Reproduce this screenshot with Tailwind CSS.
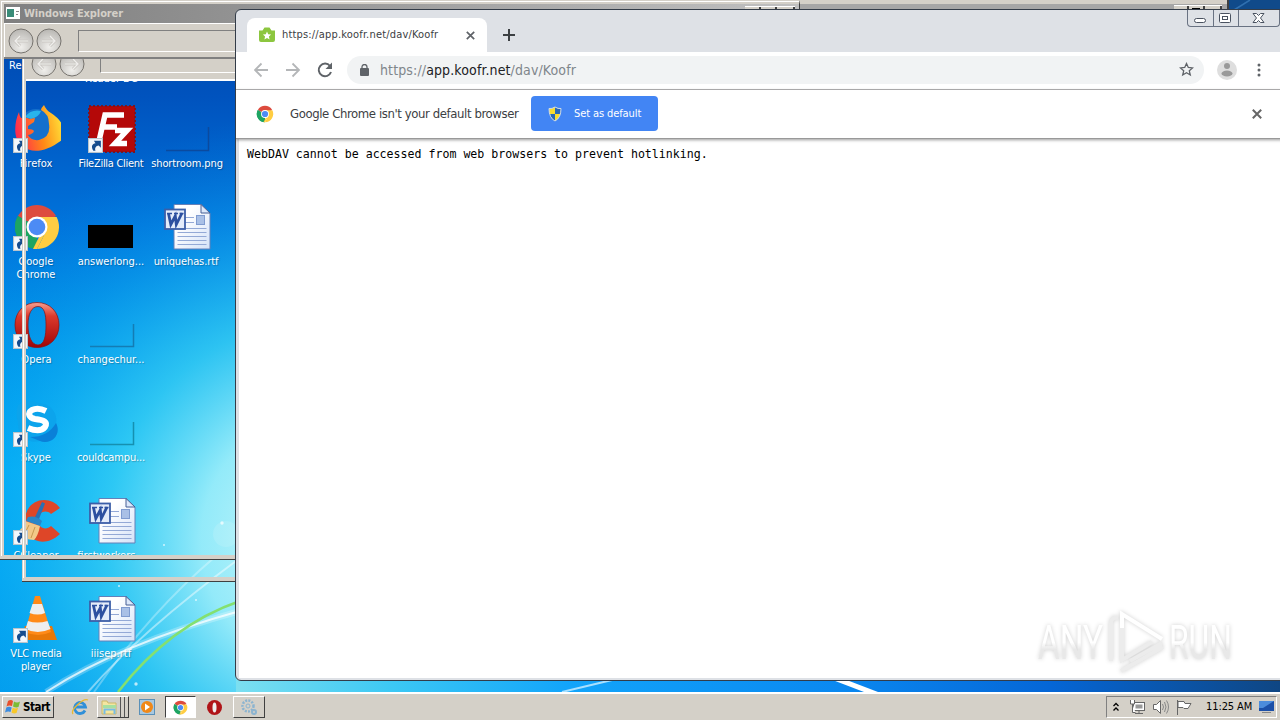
<!DOCTYPE html>
<html lang="en">
<head>
<meta charset="utf-8">
<title>Desktop</title>
<script src="https://cdn.jsdelivr.net/npm/@tailwindcss/browser@4"></script>
</head>
<body class="w-[1280px] h-[720px] overflow-hidden font-['DejaVu_Sans_Condensed','DejaVu_Sans',sans-serif] text-[11px]">
<svg width="0" height="0" class="absolute">
  <defs>
    <linearGradient id="page" x1="0" y1="0" x2="1" y2="1"><stop offset=".3" stop-color="#fff"/><stop offset="1" stop-color="#d4e2f8"/></linearGradient>
    <radialGradient id="ball" cx=".5" cy=".75" r=".8"><stop offset="0" stop-color="#f0efec"/><stop offset="1" stop-color="#b4b2ae"/></radialGradient>
    <linearGradient id="red" x1="0" y1="0" x2="0" y2="1"><stop offset="0" stop-color="#f8a090"/><stop offset=".3" stop-color="#dc3a2c"/><stop offset="1" stop-color="#a00508"/></linearGradient>
    <linearGradient id="fox" x1="0" y1=".5" x2="1" y2=".3"><stop offset="0" stop-color="#ff2a50"/><stop offset=".5" stop-color="#ff8a16"/><stop offset="1" stop-color="#ffe93c"/></linearGradient>
    <symbol id="word" viewBox="0 0 48 48">
      <path d="M10 1.500h27l9 8.500v36h-36z" fill="url(#page)" stroke="#6580b8"/>
      <path d="M37 1.500v8.500h9z" fill="#dce8fa" stroke="#465f94"/>
      <path d="M21 14.500h9M21 19.500h9M13.500 25.500h29M13.500 29.500h29M13.500 33.500h29M13.500 37.500h29M13.500 41.500h29" stroke="#93a9d6"/>
      <rect x="32.500" y="12.500" width="8" height="9" fill="#a9c0e6" stroke="#7f9bd0"/>
      <rect x="1" y="6.500" width="20" height="19.500" fill="#e4ecfa" stroke="#3c5fa8" stroke-width="1.800"/>
      <path d="M4.500 10.500l2.300 11 4.500-8.500 1 8.500L18 10" fill="none" stroke="#2d50a0" stroke-width="2.800"/><path d="M3 10.500h5M10 10.500h4M15.500 10.500h4" stroke="#2d50a0" stroke-width="1.500"/>
    </symbol>
    <symbol id="chrome" viewBox="0 0 48 48">
      <path d="M24 24L4.950 13A22 22 0 0 1 43.050 13z" fill="#dd4b3e"/>
      <path d="M24 24L24 46A22 22 0 0 1 4.950 13z" fill="#1da462"/>
      <path d="M24 14H43.600A22 22 0 0 1 24 46L32.700 29z" fill="#ffcd42"/>
      <path d="M4.950 13L15.300 29 24 34 18 45.200A22 22 0 0 1 4.950 13z" fill="#1da462"/>
      <path d="M32.700 29L24 46H20L26 34z" fill="#ffcd42"/>
      <circle cx="24" cy="24" r="10.500" fill="#fff"/><circle cx="24" cy="24" r="8.300" fill="#4c8bf5"/>
    </symbol>
    <symbol id="opera" viewBox="0 0 48 48">
      <path fill-rule="evenodd" d="M24 1.500C11 1.500 2 11 2 24s9 22.500 22 22.500 22-9.500 22-22.500S37 1.500 24 1.500zm1 4c6.500 0 8 8 8 18.500s-1.500 20-8 20-10-9-10-20 3.500-18.500 10-18.500z" fill="url(#red)" stroke="#8c1010" stroke-width=".7"/>
    </symbol>
    <symbol id="link" viewBox="0 0 14 14">
      <rect x=".5" y=".5" width="13" height="13" fill="#f4f8fc" stroke="#b9c4cc"/>
      <path d="M5 12C2.500 8 4 5.500 7 5L5.500 2.500H12V9L10 7C7.500 7.500 6 9 7 12z" fill="#164c8e"/>
    </symbol>
    <symbol id="back" viewBox="0 0 26 26">
      <circle cx="13" cy="13" r="12" fill="url(#ball)" stroke="#77746f"/>
      <path d="M20 13H8M12 8l-5 5 5 5" fill="none" stroke="#cbc8c3" stroke-width="3"/><path d="M20 13H8M12 8l-5 5 5 5" fill="none" stroke="#f0efed" stroke-width="1.200"/>
    </symbol>
    <symbol id="fwd" viewBox="0 0 26 26">
      <circle cx="13" cy="13" r="12" fill="url(#ball)" stroke="#77746f"/>
      <path d="M6 13h12M14 8l5 5-5 5" fill="none" stroke="#cbc8c3" stroke-width="3"/><path d="M6 13h12M14 8l5 5-5 5" fill="none" stroke="#f0efed" stroke-width="1.200"/>
    </symbol>
  </defs>
</svg>

<main class="relative w-[1280px] h-[692px] overflow-hidden">
  <!-- wallpaper -->
  <svg class="absolute inset-0" width="1280" height="692" viewBox="0 0 1280 692">
    <defs>
      <linearGradient id="sky" x1="0" y1="0" x2="0" y2="1"><stop offset="0" stop-color="#0045a8"/><stop offset=".14" stop-color="#0053be"/><stop offset=".33" stop-color="#0074dc"/><stop offset=".5" stop-color="#0096ea"/><stop offset=".68" stop-color="#00acf6"/><stop offset="1" stop-color="#009cee"/></linearGradient>
      <radialGradient id="glow" gradientUnits="userSpaceOnUse" cx="330" cy="540" r="430"><stop offset="0" stop-color="#d8fbfa"/><stop offset=".3" stop-color="#a0f0fa" stop-opacity=".92"/><stop offset=".52" stop-color="#3cd2f4" stop-opacity=".75"/><stop offset=".78" stop-color="#14b0f2" stop-opacity=".3"/><stop offset="1" stop-color="#0090e8" stop-opacity="0"/></radialGradient>
      <linearGradient id="floor"><stop offset="0" stop-color="#7cdff0"/><stop offset=".15" stop-color="#3cc8f4"/><stop offset=".32" stop-color="#12a4fa"/><stop offset=".58" stop-color="#0a88f0"/><stop offset=".78" stop-color="#0566d6"/><stop offset="1" stop-color="#0f4683"/></linearGradient>
    </defs>
    <rect width="1280" height="692" fill="url(#sky)"/>
    <rect width="760" height="692" fill="url(#glow)"/>
    <rect x="1220" width="60" height="20" fill="#104a8a"/><path d="M1234 10l16-10" stroke="#3070b0" stroke-width="1.500"/>
    <rect x="236" y="676" width="1044" height="16" fill="url(#floor)"/>
    <path d="M562 692L612 680" stroke="#a8e0ff" stroke-width="2"/><path d="M830 679h14l34 13h-14z" fill="#fff"/>
    <g fill="none" stroke="#fff">
      <path d="M88 692Q140 632 240 558" stroke-opacity=".45" stroke-width="2"/>
      <path d="M94 692Q150 612 216 556" stroke-opacity=".3" stroke-width="2"/>
      <path d="M46 692Q120 644 240 611" stroke-opacity=".25" stroke-width="6"/>
      <path d="M46 692Q120 644 240 611" stroke-opacity=".75" stroke-width="2"/>
    </g>
    <path d="M118 692Q170 625 240 601" fill="none" stroke="#84e070" stroke-width="2.500"/>
    <g fill="#fff" fill-opacity=".7"><circle cx="222" cy="523" r="1.700"/><circle cx="136" cy="684" r="1.700"/><circle cx="119" cy="586" r="1"/><circle cx="164" cy="545" r="1"/><circle cx="196" cy="600" r="1"/></g>
    <circle cx="226" cy="534" r="13" fill="#fff" fill-opacity=".12"/>
  </svg>

  <!-- desktop icons -->
  <div class="absolute left-[9px] top-[59px] text-white leading-[13px]">Re</div>
  <div class="absolute left-[85px] top-[72px] text-white leading-[13px]">Reader DC</div>
  <div class="absolute left-0 top-[105px] grid grid-cols-[72px_78px_74px] auto-rows-[98px] text-white text-center leading-[13px] [text-shadow:1px_1px_1px_#00000040]">
    <div class="flex flex-col items-center">
      <div class="relative w-12 h-12 ml-0.5 mb-1">
        <svg width="48" height="48" viewBox="0 0 48 48"><circle cx="23" cy="20" r="16" fill="#1470cc"/><path d="M12 12q6-8 16-6-2 6-10 8z" fill="#28b4ec"/><path d="M6 7q0 3 2 6 5-1 9 1l5-1-1 4-6 4v3q5 0 6 2-1 3-6 4 3 6 11 5 12-3 10-16 0-10-8-14 0-2 3-5 2 5 7 8 18 12 11 27C33 47 19 49 9 41 0 34 1 18 6 7z" fill="url(#fox)"/></svg>
        <svg class="absolute left-0 bottom-0" width="15" height="15"><use href="#link"/></svg>
      </div><span>Firefox</span>
    </div>
    <div class="flex flex-col items-center">
      <div class="relative w-12 h-12 mb-1 ml-0.5">
        <svg width="48" height="48" viewBox="0 0 48 48"><rect x="1" y="1" width="46" height="46" fill="#b40808" stroke="#7c1420" stroke-width="2" stroke-dasharray="2 2"/><path d="M11 36L17 10H36M15 22H29M27 25.500H39L27 38.500H39" fill="none" stroke="#fff" stroke-width="5.500"/></svg>
        <svg class="absolute left-0 bottom-0" width="15" height="15"><use href="#link"/></svg>
      </div><span class="tracking-[-0.28px]">FileZilla Client</span>
    </div>
    <div class="flex flex-col items-center">
      <div class="w-12 h-12 mb-1"><svg width="48" height="48"><path d="M3 45.500H45.500V22" fill="none" stroke="#0b4a9e" stroke-width="1.500"/></svg></div><span class="tracking-[-0.1px]">shortroom.png</span>
    </div>

    <div class="flex flex-col items-center">
      <div class="relative w-12 h-12 ml-0.5 mb-1"><svg width="48" height="48"><use href="#chrome"/></svg><svg class="absolute left-0 bottom-0" width="15" height="15"><use href="#link"/></svg></div><span>Google<br>Chrome</span>
    </div>
    <div class="flex flex-col items-center">
      <div class="w-12 h-12 mb-1 pl-px pt-[22px]"><div class="w-[45px] h-[23px] bg-black"></div></div><span>answerlong...</span>
    </div>
    <div class="flex flex-col items-center"><svg class="mb-1 ml-px" width="48" height="48"><use href="#word"/></svg><span class="tracking-[-0.1px] mr-0.5">uniquehas.rtf</span></div>

    <div class="flex flex-col items-center">
      <div class="relative w-12 h-12 ml-0.5 mb-1"><svg width="48" height="48"><use href="#opera"/></svg><svg class="absolute left-0 bottom-0" width="15" height="15"><use href="#link"/></svg></div><span class="ml-px">Opera</span>
    </div>
    <div class="flex flex-col items-center">
      <svg class="mb-1" width="48" height="48"><path d="M3 45.500H46.500V23" fill="none" stroke="#147cb4" stroke-width="1.500"/></svg><span>changechur...</span>
    </div>
    <div></div>

    <div class="flex flex-col items-center">
      <div class="relative w-12 h-12 ml-0.5 mb-1"><svg width="48" height="48" viewBox="0 0 48 48"><path d="M5 6q10-7 20-2c14 0 20 12 18 20 6 12-5 22-16 18C14 46 4 34 5 24q-3-10 0-18z" fill="#0ca4ec"/><path d="M43 24c6 12-5 22-16 18l-10-4q18 0 26-14z" fill="#0a80d8"/><path d="M33 12q-8-4-14-1c-5 3-3 8 3 9 9 1 13 3 10 8q-5 6-17 1" fill="none" stroke="#fff" stroke-width="6"/></svg><svg class="absolute left-0 bottom-0" width="15" height="15"><use href="#link"/></svg></div><span>Skype</span>
    </div>
    <div class="flex flex-col items-center">
      <svg class="mb-1" width="48" height="48"><path d="M3 45.500H46.500V23" fill="none" stroke="#1690b0" stroke-width="1.500"/></svg><span class="tracking-[-0.15px]">couldcampu...</span>
    </div>
    <div></div>

    <div class="flex flex-col items-center">
      <div class="relative w-12 h-12 ml-0.5 mb-1"><svg width="48" height="48" viewBox="0 0 48 48"><path d="M47 11C38-2 14 0 12 22s19 30 35 15l-9-8c-5 5-13 2-13-6s8-11 13-6z" fill="#de4628"/><path d="M29 5l3 1.500-7 18-4-2z" fill="#2a70b4"/><path d="M15 20q8-2 14 4l-2 5-14-5z" fill="#2a86c8"/><path d="M12 24l15 5q-2 10-6 14-10 0-17-8 6-3 8-11z" fill="#f2c888"/><path d="M16 28l-5 10M22 30l-4 11" stroke="#c89850"/></svg><svg class="absolute left-0 bottom-0" width="15" height="15"><use href="#link"/></svg></div><span>CCleaner</span>
    </div>
    <div class="flex flex-col items-center"><svg class="mb-1 ml-[3px]" width="48" height="48"><use href="#word"/></svg><span>firstworkers...</span></div>
    <div></div>

    <div class="flex flex-col items-center">
      <div class="relative w-12 h-12 ml-0.5 mb-1"><svg width="48" height="48" viewBox="0 0 48 48"><path d="M12 31h27l5 14H8z" fill="#e87808"/><path d="M22 1h5l11 36q-13 6-26 0z" fill="#ff8a18"/><path d="M19.500 9h9.500l3 9q-7 3-15.500 0zM15 26q9 3 19.500 0l3 8q-13 6-25 0z" fill="#eee"/></svg><svg class="absolute left-0 bottom-0" width="15" height="15"><use href="#link"/></svg></div><span class="tracking-[-0.2px]">VLC media<br>player</span>
    </div>
    <div class="flex flex-col items-center"><svg class="mb-1 ml-[3px]" width="48" height="48"><use href="#word"/></svg><span>iiisep.rtf</span></div>
    <div></div>
  </div>

  <!-- rear explorer window -->
  <section class="absolute left-[22px] top-0 w-[1207px] h-[581px] border-l-4 border-b-4 border-r-2 border-[#d4d0c8] border-r-[#404040] shadow-[0_1px_0_#404040]">
    <div class="absolute -left-[3px] top-0 w-px h-[578px] bg-white"></div>
    <div class="h-[10px] border-t-4 border-[#d4d0c8] bg-[#a6a6a6] flex justify-end pr-[5px]">
      <div class="mt-px h-5 w-[48px] bg-[#d4d0c8] border-t border-white flex"><i class="w-[15px] border-r-2 border-[#404040]"></i><i class="w-[16px] border-r-2 border-[#404040] px-[3px] pt-[2px]"><i class="block h-[2px] bg-black"></i></i><i class="w-[17px] border-r-2 border-[#404040]"></i></div>
    </div>
    <div class="relative h-[71px] bg-[#d4d0c8] border-b-2 border-b-white flex items-end overflow-hidden">
      <svg class="ml-[5px] mb-[2px]" width="26" height="26"><use href="#back"/></svg>
      <svg class="ml-[2px] mb-[2px]" width="26" height="26"><use href="#fwd"/></svg>
      <div class="ml-[15px] mb-[6px] h-6 flex-1 border-l border-b border-l-[#808080] border-b-white"></div>
    </div>
  </section>

  <!-- front explorer window -->
  <section class="absolute left-0 top-0 w-[800px] h-[559px] flex flex-col border-4 border-[#d4d0c8] border-r-[#404040] border-r-[1px] shadow-[0_1px_0_#404040]">
    <div class="absolute -left-[3px] -top-[3px] w-[798px] h-[555px] border-l border-t border-white"></div>
    <header class="h-[19px] shrink-0 flex pl-[2px] bg-linear-to-r from-[#808080] to-[#c0c0c0] text-[#d4d0c8] font-bold overflow-hidden">
      <svg class="mt-[3px]" width="14" height="12"><rect width="14" height="12" fill="#fff"/><rect x="1" y="2" width="7" height="8" fill="#3a8c78"/><path d="M10 4.500h3M10 7.500h2" stroke="#888"/></svg>
      <span class="ml-1 mt-[2px] leading-4 tracking-[-0.1px]">Windows Explorer</span>
      <div class="ml-auto mr-1 mt-[2px] w-[50px] bg-[#d4d0c8] border-t border-white flex"><i class="w-[16px] border-r-2 border-[#404040]"></i><i class="w-[16px] border-r-2 border-[#404040] px-[3px] pt-[2px]"><i class="block h-[2px] bg-black"></i></i><i class="w-[18px] border-r-2 border-[#404040]"></i></div>
    </header>
    <div class="h-[36px] shrink-0 flex items-center pl-1 bg-[#d4d0c8] border-t border-t-white border-b-2 border-b-[#808080] shadow-[inset_1px_0_0_#fff]">
      <svg width="26" height="26"><use href="#back"/></svg>
      <svg class="ml-[2px]" width="26" height="26"><use href="#fwd"/></svg>
      <div class="ml-4 h-[22px] flex-1 border-l border-y border-l-[#808080] border-t-[#808080] border-b-white"></div>
    </div>
  </section>

  <!-- browser window -->
  <section class="absolute left-[235px] top-[9px] w-[1052px] h-[672px] rounded-md border border-[#333c48] bg-[#dee1e6] overflow-hidden">
    <div class="h-[42px] flex items-end pl-[11px]">
      <div class="w-[240px] h-[34px] bg-white rounded-t-lg flex items-center pl-3">
        <svg width="16" height="16" viewBox="0 0 16 16"><path d="M0 3.500h3.500L5.500.500h5L12.500 3.500H16V13q0 2-2 2H2q-2 0-2-2z" fill="#8cc63f"/><path d="M8 4.500l1.200 2.700 2.900.3-2.200 2 .7 2.900L8 10.900l-2.600 1.500.7-2.900-2.200-2 2.900-.3z" fill="#fff"/></svg>
        <span class="ml-[7px] text-[#3c4043] tracking-[0.17px]">https://app.koofr.net/dav/Koofr</span>
        <svg class="ml-auto mr-3" width="9" height="9" viewBox="0 0 9 9"><path d="M.8.8l7.400 7.400M8.200.8L.8 8.200" stroke="#5f6368" stroke-width="1.700"/></svg>
      </div>
      <svg class="ml-4 mb-[11px]" width="12" height="12"><path d="M6 0v12M0 6h12" stroke="#3c4043" stroke-width="2"/></svg>
    </div>
    <div class="h-[38px] bg-white border-b border-[#b6b4b6] flex items-center pb-[2px]">
      <svg class="ml-[18px]" width="74" height="16" fill="none" stroke-width="1.800"><path d="M14 8H1M7.500 1.500L1 8l6.500 6.500M32 8h13M38.500 1.500L45 8l-6.500 6.500" stroke="#b4b6b8"/></svg>
      <svg class="-ml-[11px]" width="16" height="16" viewBox="0 0 16 16"><path d="M13 4A6.300 6.300 0 1 0 14 10" fill="none" stroke="#5f6368" stroke-width="2"/><path d="M15 .5v6.500H8.500z" fill="#5f6368"/></svg>
      <div class="ml-[14px] w-[857px] h-7 rounded-full bg-[#f1f3f4] flex items-center pl-[13px] pr-[10px]">
        <svg width="9" height="12"><rect y="4" width="9" height="8" rx="1" fill="#5f6368"/><path d="M2 5V3a2.500 2.500 0 0 1 5 0v2" fill="none" stroke="#5f6368" stroke-width="1.300"/></svg>
        <span class="ml-[11px] mt-px text-[14px] text-[#80868b] tracking-[0.12px]">https://<b class="font-normal text-[#202124]">app.koofr.net</b>/dav/Koofr</span>
        <svg class="ml-auto" width="15" height="15" viewBox="0 0 15 15"><path d="M7.500 1.500l1.800 4 4.300.4-3.300 2.900 1 4.200-3.800-2.200L3.700 13l1-4.200L1.400 5.900l4.300-.4z" fill="none" stroke="#5f6368" stroke-width="1.300"/></svg>
      </div>
      <svg class="ml-[13px]" width="20" height="20"><circle cx="10" cy="10" r="10" fill="#dedede"/><circle cx="10" cy="6" r="3" fill="#999"/><ellipse cx="10" cy="13.500" rx="5.500" ry="3" fill="#999"/></svg>
      <svg class="ml-[20px]" width="4" height="14" fill="#5f6368"><circle cx="2" cy="2" r="1.500"/><circle cx="2" cy="7" r="1.500"/><circle cx="2" cy="12" r="1.500"/></svg>
    </div>
    <div class="relative h-[49px] bg-white border-b border-[#999] shadow-[0_1px_3px_#0006] flex items-center pl-5">
      <svg width="18" height="18"><use href="#chrome"/></svg>
      <span class="ml-4 w-[229px] text-[13px] tracking-[-0.4px] whitespace-nowrap text-[#3c4043]">Google Chrome isn't your default browser</span>
      <button class="ml-3 mb-px w-[127px] h-[35px] rounded-sm bg-[#4285f4] text-white flex items-center pl-[17px]">
        <svg width="14" height="16" viewBox="0 0 14 16"><path d="M7 1q3 2 6 1.500Q13 12 7 15 1 12 1 2.500 4 3 7 1z" fill="#f8dc30"/><path d="M7 1q3 2 6 1.500Q13 5 12.700 8H7zM7 8v7Q3 13 1.300 8z" fill="#2868b8"/><path d="M7 1q3 2 6 1.500Q13 12 7 15 1 12 1 2.500 4 3 7 1z" fill="none" stroke="#d0dce8"/></svg>
        <span class="ml-3 mt-px tracking-[-0.1px]">Set as default</span>
      </button>
      <svg class="ml-auto mr-[24px]" width="10" height="10"><path d="M.8.8l8.400 8.400M9.200.8L.8 9.200" stroke="#666" stroke-width="2"/></svg>
    </div>
    <div class="h-[539px] ml-[3px] bg-white pt-[7px] pl-2 font-['DejaVu_Sans_Mono',monospace] text-[11.600px] leading-4 text-black">WebDAV cannot be accessed from web browsers to prevent hotlinking.</div>
    <!-- caption buttons -->
    <div class="absolute left-[951px] top-0 h-[17px] w-[93px] flex border border-t-0 border-[#697282] rounded-b">
      <svg width="92" height="16" fill="none" stroke="#4a5260"><path d="M25.500 0v16M50.500 0v16" stroke="#697282"/><rect x="6.500" y="8.500" width="11" height="4" rx="2" fill="#fff"/><rect x="31.500" y="3.500" width="11" height="9" rx="1" fill="#fff"/><rect x="34.500" y="6.500" width="5" height="3"/><path d="M65 3.500h3.500l2 2 2-2H76l-3.500 4.500 3.500 4.500h-3.500l-2-2-2 2H65l3.500-4.500z" fill="#fff"/></svg>
    </div>
  </section>

  <!-- watermark -->
  <svg class="absolute left-[1030px] top-[600px] drop-shadow-[0_0_2px_#00000030]" width="250" height="80" fill="none" stroke="#ececec" stroke-width="4">
    <defs><linearGradient id="fade" x1="0" y1="0" x2="0" y2="1"><stop offset=".5" stop-color="#fff"/><stop offset=".62" stop-color="#e8e8e8"/></linearGradient></defs>
    <g font-family="Roboto,sans-serif" font-size="48" fill="url(#fade)" stroke="none"><text x="8" y="59" textLength="65" lengthAdjust="spacingAndGlyphs">ANY</text><text x="139" y="59" textLength="63" lengthAdjust="spacingAndGlyphs">RUN</text></g>
    <path d="M88 18q-7-1-7 5v38"/><path d="M92 55V14l40 25" stroke="#fff"/><path d="M92 28v32l30-18M100 61l32-18M91 71l42-24"/>
  </svg>
</main>

<!-- taskbar -->
<footer class="h-[28px] bg-[#d4d0c8] border-t-2 border-white flex items-center relative">
  <button class="ml-[2px] w-[52px] h-[22px] flex items-center gap-0.5 pl-0.5 font-bold text-[11.500px] tracking-[-0.5px] border border-t-white border-l-white border-r-[#404040] border-b-[#404040]">
    <svg width="16" height="16" viewBox="0 0 16 16"><path d="M3 2q3-2 5 0L7 7Q4 6 1.500 7.500z" fill="#e8502c"/><path d="M9 2.500q3 2 6 0L13.500 8Q11 9 8 7.500z" fill="#7cbc34"/><path d="M1.300 8.500Q4 7 6.700 8.500L5.500 13Q3 12 0 13.500z" fill="#3c8ce0"/><path d="M7.700 8.800Q10 10 13 9l-1.500 5Q9 15 6.500 13.500z" fill="#f8c828"/></svg>
    <span class="mt-px">Start</span>
  </button>
  <svg class="ml-[17px]" width="18" height="18" viewBox="0 0 18 18"><path d="M14 12.500A5.500 5.500 0 1 1 14.500 9H5" fill="none" stroke="#2f8fd8" stroke-width="2.800"/><path d="M2 16C-1 12 12 0 17 2" fill="none" stroke="#e8b830" stroke-width="1.300"/></svg>
  <div class="ml-[8px] w-[32px] h-[22px] flex items-center border border-t-white border-l-white border-[#404040]">
    <svg width="30" height="20"><path d="M4 4h5l1 2h8v11H4z" fill="#f4e6a0" stroke="#ccb868"/><rect x="5" y="8" width="13" height="3" fill="#a8e0a0"/><path d="M6.500 17v-4.500h10V17" fill="none" stroke="#78bce4" stroke-width="2"/><path d="M22.500 0v20M26.500 0v20" stroke="#555"/></svg>
  </div>
  <svg class="ml-[10px]" width="16" height="16"><rect x=".5" y=".5" width="15" height="15" fill="#a8c8e0" stroke="#5a90b8"/><circle cx="8" cy="8" r="6" fill="#f08818"/><path d="M6 4.500v7l5-3.500z" fill="#fff"/></svg>
  <div class="ml-[10px] w-[31px] h-[22px] bg-white flex items-center justify-center border border-[#404040] border-r-white border-b-white"><svg width="15" height="15"><use href="#chrome"/></svg></div>
  <svg class="ml-[11px]" width="15" height="15"><circle cx="7.500" cy="7.500" r="7.500" fill="#b01418"/><ellipse cx="7.500" cy="7.500" rx="2" ry="5" fill="#eee"/></svg>
  <div class="ml-[11px] w-[32px] h-[22px] flex items-center justify-center border border-t-white border-l-white border-[#404040]"><svg width="18" height="18" fill="none" stroke="#8cb4d0"><circle cx="8" cy="8" r="5.500" stroke-width="2.500" stroke-dasharray="2 1.200"/><circle cx="8" cy="8" r="2"/><circle cx="14" cy="14" r="2" stroke-width="2"/></svg></div>
  <div class="ml-auto mr-[3px] w-[171px] h-[22px] flex items-center pl-[6px] border border-[#808080] border-b-white border-r-white">
    <svg width="6" height="10" fill="none" stroke="#000" stroke-width="1.300"><path d="M.5 4L3 1.500 5.500 4M.5 8.500L3 6l2.500 2.500"/></svg>
    <svg class="ml-[10px]" width="16" height="16" fill="#fff" stroke="#666"><rect x="4.500" y="3.500" width="11" height="8"/><rect x="6.500" y="5.500" width="7" height="4" fill="#999" stroke="none"/><path d="M6 14.500h8M10 12v2M1.500 1v4h4V1M3.500 5v8.500h3"/></svg>
    <svg class="ml-[7px]" width="17" height="16" fill="#fff" stroke="#666"><path d="M1.500 5.500h3l4-4v13l-4-4h-3z"/><path d="M10.500 5q2 3 0 6M12.500 3q3 5 0 10M14.500 1.500q4 6.500 0 13" fill="none" stroke="#888"/></svg>
    <svg class="ml-[7px]" width="17" height="16" fill="#fff" stroke="#666"><path d="M1.500 1v15M2 2.500h6l1 2h6l-3 5H8l-1-1H2z"/></svg>
    <span class="ml-[13px] mt-px text-[11px] whitespace-nowrap tracking-[-0.1px]">11:25 AM</span>
    <svg class="ml-auto mr-0.5" width="15" height="13"><path d="M0 0h15v10H0z" fill="#1c50a8"/><path d="M0 0h15L4 7H0z" fill="#4c8cdc"/><path d="M3 11.500h9" stroke="#888"/></svg>
  </div>
</footer>
</body>
</html>
